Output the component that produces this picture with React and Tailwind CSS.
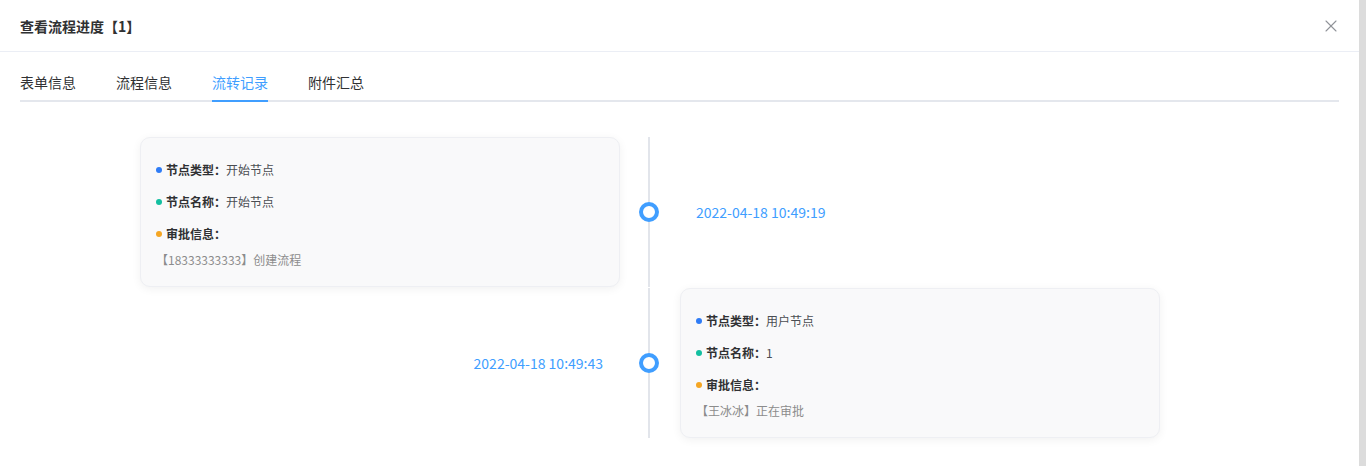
import { X } from "lucide-react";

const records = [
  {
    side: "left",
    type: "开始节点",
    name: "开始节点",
    info: "【18333333333】创建流程",
    time: "2022-04-18 10:49:19",
  },
  {
    side: "right",
    type: "用户节点",
    name: "1",
    info: "【王冰冰】正在审批",
    time: "2022-04-18 10:49:43",
  },
];

const tabs = ["表单信息", "流程信息", "流转记录", "附件汇总"];

function Card({ item }) {
  return (
    <div className="w-[480px] rounded-[10px] border border-[#eeeff3] bg-[#f9f9fa] px-[15px] pt-[22px] pb-[16px] shadow-[0_2px_10px_rgba(0,0,0,0.06)]">
      <div className="flex h-[20px] items-center text-xs">
        <span className="mr-[4px] h-[6px] w-[6px] rounded-full bg-[#2f7cf6]" />
        <span className="font-bold text-[#303133]">节点类型：</span>
        <span className="text-[#4a4d52]">{item.type}</span>
      </div>
      <div className="mt-[12px] flex h-[20px] items-center text-xs">
        <span className="mr-[4px] h-[6px] w-[6px] rounded-full bg-[#13bfa0]" />
        <span className="font-bold text-[#303133]">节点名称：</span>
        <span className="text-[#4a4d52]">{item.name}</span>
      </div>
      <div className="mt-[12px] flex h-[20px] items-center text-xs">
        <span className="mr-[4px] h-[6px] w-[6px] rounded-full bg-[#f5a623]" />
        <span className="font-bold text-[#303133]">审批信息：</span>
      </div>
      <div className="mt-[6px] h-[20px] text-xs leading-[20px] text-[#8c8c8c]">{item.info}</div>
    </div>
  );
}

function Row({ item }) {
  return (
    <div className="flex">
      <div className="flex w-[480px] items-center justify-end">
        {item.side === "left" ? (
          <Card item={item} />
        ) : (
          <span className="pr-[17px] text-sm text-[#409eff]">{item.time}</span>
        )}
      </div>
      <div className="flex w-[58px] flex-col items-center">
        <div className="w-[2px] flex-1 bg-[#e2e5eb]" />
        <div className="h-[20px] w-[20px] rounded-full border-[4px] border-[#409eff] bg-white" />
        <div className="w-[2px] flex-1 bg-[#e2e5eb]" />
      </div>
      <div className="ml-[2px] flex w-[480px] items-center">
        {item.side === "right" ? (
          <Card item={item} />
        ) : (
          <span className="pl-[16px] text-sm text-[#409eff]">{item.time}</span>
        )}
      </div>
    </div>
  );
}

export default function App() {
  return (
    <div
      className="flex h-[466px] w-[1366px] bg-white"
      style={{ fontFamily: '"Noto Sans CJK SC", "Liberation Sans", sans-serif' }}
    >
      <div className="flex-1">
        {/* header */}
        <div className="flex h-[52px] items-center justify-between border-b border-[#ebeef5] pl-[20px] pr-[18px]">
          <h1 className="text-sm font-bold text-[#303133]">查看流程进度【1】</h1>
          <X size={20} strokeWidth={1.3} className="text-[#909399]" />
        </div>

        {/* tabs */}
        <div className="px-[20px] pt-[10px]">
          <div className="flex border-b-2 border-[#e4e7ed]">
            {tabs.map((t, i) => (
              <div
                key={t}
                className={`relative -mb-[2px] h-[40px] border-b-2 text-sm leading-[40px] ${
                  i === 0 ? "" : "ml-[40px]"
                } ${i === 2 ? "border-[#409eff] text-[#409eff]" : "border-transparent text-[#303133]"}`}
              >
                {t}
              </div>
            ))}
          </div>
        </div>

        {/* timeline */}
        <div className="flex flex-col gap-[1px] pt-[35px] pl-[140px]">
          {records.map((r) => (
            <Row key={r.time} item={r} />
          ))}
        </div>
      </div>
      <div className="w-[7px] bg-[#dcdcdc]" />
    </div>
  );
}
